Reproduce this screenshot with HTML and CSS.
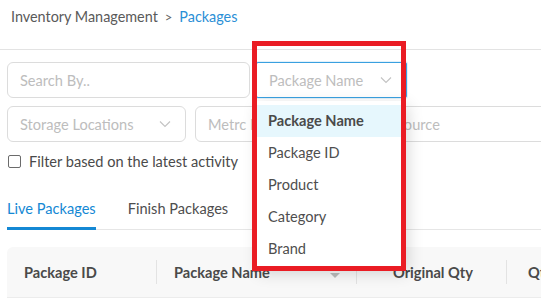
FILE: index.html
```html
<!DOCTYPE html>
<html>
<head>
<meta charset="utf-8">
<link rel="stylesheet" href="styles.css">
</head>
<body>
<div class="page">
  <header class="topbar">
    <nav class="crumbs">
      <span class="crumb">Inventory Management</span>
      <span class="sep">&gt;</span>
      <span class="crumb current">Packages</span>
    </nav>
  </header>

  <main class="content">
    <section class="filters">
      <div class="row row-search">
        <div class="field search">Search By..</div>
        <div class="field select focused">
          <span>Package Name</span>
          <svg class="chev" width="12" height="8" viewBox="0 0 12 8"><path d="M1 1.5 L6 6.5 L11 1.5" fill="none" stroke="#c4c4c4" stroke-width="1.2"/></svg>
        </div>
      </div>
      <div class="row row-grid">
        <div class="field select">
          <span>Storage Locations</span>
          <svg class="chev" width="12" height="8" viewBox="0 0 12 8"><path d="M1 1.5 L6 6.5 L11 1.5" fill="none" stroke="#c4c4c4" stroke-width="1.2"/></svg>
        </div>
        <div class="field">Metrc Date</div>
        <div class="field">Source</div>
      </div>
      <label class="check">
        <span class="box"></span>
        <span>Filter based on the latest activity</span>
      </label>
    </section>

    <div class="tabs">
      <div class="tab active">Live Packages</div>
      <div class="tab">Finish Packages</div>
    </div>

    <div class="table-head">
      <div class="th c1">Package ID</div>
      <div class="th c2">Package Name<span class="sort"></span></div>
      <div class="th c3">Original Qty</div>
      <div class="th c4">Qty</div>
    </div>
  </main>

  <ul class="menu">
    <li class="opt selected">Package Name</li>
    <li class="opt">Package ID</li>
    <li class="opt">Product</li>
    <li class="opt">Category</li>
    <li class="opt">Brand</li>
  </ul>

  <div class="highlight"></div>
</div>
</body>
</html>
```

FILE: styles.css
```css
* { box-sizing: border-box; }
html, body { margin: 0; padding: 0; }
body {
  width: 541px;
  height: 300px;
  overflow: hidden;
  background: #fff;
  font-family: "Lato", "Open Sans", sans-serif;
  font-size: 14.6px;
  color: #555;
}
.page { position: relative; width: 541px; height: 300px; overflow: hidden; }

.topbar {
  height: 50px;
  border-bottom: 1px solid #e3e3e3;
  padding: 7px 0 0 11px;
}
.crumbs { display: flex; align-items: center; gap: 7px; height: 19px; font-size: 14.4px; }
.crumb { color: #5a5a5a; }
.crumb.current { color: #2b8fd6; }
.sep { color: #666; font-size: 13px; }

.content { padding: 12px 0 0 7px; }
.filters { display: flex; flex-direction: column; }
.row { display: flex; gap: 6px; }
.row-search { height: 36px; }
.row-grid { margin-top: 8px; gap: 9px; width: 555px; height: 36px; }
.field {
  height: 36px;
  border: 1px solid #dcdcdc;
  border-radius: 6px;
  color: #bdbdbd;
  display: flex;
  align-items: center;
  padding: 0 12px;
  background: #fff;
  white-space: nowrap;
  overflow: hidden;
}
.search { width: 243px; }
.row-search .select { width: 151px; }
.row-grid .field { width: 179px; flex: none; }
.select { justify-content: space-between; padding-right: 14px; }
.select.focused {
  border-color: #3aa0e0;
  border-radius: 2px;
  box-shadow: 0 0 0 1px rgba(58,160,224,0.15);
}
.chev { flex: none; }

.check { display: flex; align-items: center; gap: 8px; margin-top: 11px; height: 16px; color: #4a4a4a; padding-left: 1px; }
.box { width: 13px; height: 13px; border: 1px solid #6b6b6b; border-radius: 2px; background: #fff; }

.tabs {
  margin-top: 19px;
  display: flex;
  gap: 32px;
  border-bottom: 1px solid #e6e6e6;
  width: 534px;
}
.tab { padding: 12px 0 10px; color: #4e4e4e; border-bottom: 3px solid transparent; margin-bottom: -1px; }
.tab.active { color: #1488d4; border-bottom-color: #1488d4; }

.table-head {
  margin-top: 17px;
  height: 51px;
  width: 560px;
  background: #f8f8f8;
  border-bottom: 1px solid #ececec;
  border-top-left-radius: 6px;
  display: flex;
  align-items: center;
}
.th { font-weight: 700; color: #4a4a4a; padding-left: 17px; height: 24px; display: flex; align-items: center; border-right: 1px solid #e3e3e3; position: relative; white-space: nowrap; }
.c1 { width: 150px; flex: none; }
.c2 { width: 200px; flex: none; }
.c3 { width: 150px; flex: none; padding-left: 36px; }
.c4 { flex: 1; border-right: 0; padding-left: 21px; }
.sort { position: absolute; right: 16px; top: 13px; width: 0; height: 0; border-left: 5px solid transparent; border-right: 5px solid transparent; border-top: 5px solid #bbb; }

.menu {
  position: absolute;
  left: 256px;
  top: 101px;
  width: 150px;
  margin: 0;
  padding: 4px 0;
  list-style: none;
  background: #fff;
  box-shadow: 2px 4px 16px rgba(0,0,0,0.16);
  border-radius: 2px;
}
.opt { height: 32px; line-height: 32px; padding-left: 12px; color: #4e4e4e; }
.opt.selected { background: #e6f7fd; font-weight: 700; color: #4a4a4a; }

.highlight {
  position: absolute;
  left: 252px;
  top: 41px;
  width: 154px;
  height: 230px;
  border: 5px solid #ea1c24;
}
```
